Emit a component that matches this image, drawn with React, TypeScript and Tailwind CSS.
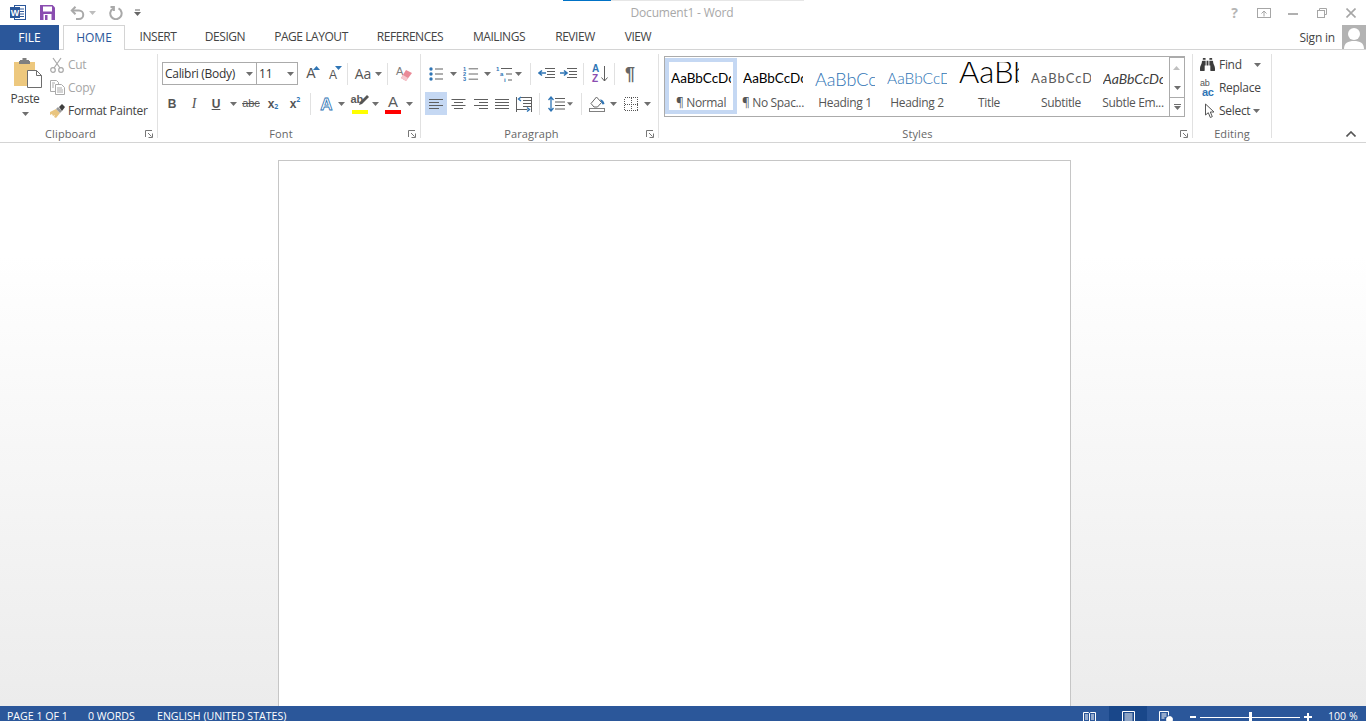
import type { ReactNode } from 'react'
import { FaBinoculars } from 'react-icons/fa'

const ui = 'font-["Open_Sans",sans-serif]'
const blue = '#2f75b5'

function Caret({ color = '#6f6f6f' }: { color?: string }) {
  return (
    <svg width="7" height="4" viewBox="0 0 7 4">
      <path d="M0 0h7L3.5 4z" fill={color} />
    </svg>
  )
}

function Launcher() {
  return (
    <svg width="8" height="8" viewBox="0 0 8 8" fill="none" stroke="#777">
      <path d="M.5 7V.5H7" />
      <path d="M3 3l3.5 3.5M3.5 7.5h4v-4" />
    </svg>
  )
}

function Sep() {
  return <div className="w-px h-[22px] bg-[#e1e1e1] shrink-0" />
}

function GroupLine() {
  return <div className="w-px h-[84px] mt-[4px] bg-[#e1e1e1] shrink-0" />
}

function Cell({ className = 'w-[22px]', children }: { className?: string; children: ReactNode }) {
  return <div className={`flex items-center justify-center h-full shrink-0 ${className}`}>{children}</div>
}

function GroupLabel({ label, launcher = true, pad = 'pr-[16px]' }: { label: string; launcher?: boolean; pad?: string }) {
  return (
    <div className={`relative mt-auto mb-[1px] h-[14px] text-center text-[11px] leading-[14px] tracking-[0.1px] text-[#666] ${pad}`}>
      {label}
      {launcher && (
        <span className="absolute right-[4px] top-[3px] flex">
          <Launcher />
        </span>
      )}
    </div>
  )
}

function Lines({ widths = [14, 14, 14, 14], align = 'left' }: { widths?: number[]; align?: 'left' | 'center' | 'right' }) {
  return (
    <svg width="15" height="12" viewBox="0 0 15 12" fill="none" stroke="#5f5f5f">
      {widths.map((w, i) => {
        const x = align === 'left' ? 0 : align === 'right' ? 15 - w : (15 - w) / 2
        return <path key={i} d={`M${x} ${1.5 + i * 3}h${w}`} />
      })}
    </svg>
  )
}

function WordLogo() {
  return (
    <svg width="16" height="15" viewBox="0 0 16 15">
      <rect x="4.5" y=".5" width="11" height="14" fill="#fff" stroke="#2b579a" />
      <path d="M10 4h4M10 6.5h4M10 9h4M10 11.5h4" stroke="#2b579a" />
      <rect x="0" y="2" width="10" height="11" fill="#2b579a" />
      <text x="5" y="11" fontSize="9" fontWeight="700" fill="#fff" textAnchor="middle" fontFamily="Liberation Sans">W</text>
    </svg>
  )
}

function SaveIcon() {
  return (
    <svg width="15" height="15" viewBox="0 0 15 15">
      <path d="M0 0h12.5L15 2.5V15H0z" fill="#8a4db0" />
      <rect x="3" y="1.5" width="9" height="5" fill="#fff" />
      <rect x="3.5" y="9" width="8" height="6" fill="#fff" />
      <rect x="5" y="10" width="2.5" height="5" fill="#8a4db0" />
    </svg>
  )
}

function UndoIcon() {
  return (
    <svg width="15" height="14" viewBox="0 0 15 14" fill="none" stroke="#a9a9a9" strokeWidth="2">
      <path d="M2 4.5h7a4.2 4.2 0 0 1 0 8.5H6" />
      <path d="M5.5 .8L1.8 4.5l3.7 3.7" />
    </svg>
  )
}

function RedoIcon() {
  return (
    <svg width="14" height="14" viewBox="0 0 14 14" fill="none" stroke="#a9a9a9" strokeWidth="2">
      <path d="M4 2.6A5.7 5.7 0 1 0 9.5 2.4" />
      <path d="M1.5 1h3.4v4" />
    </svg>
  )
}

function Customize() {
  return (
    <svg width="7" height="7" viewBox="0 0 7 7">
      <path d="M1 .5h5v1H1z" fill="#666" />
      <path d="M0 3h7L3.5 7z" fill="#666" />
    </svg>
  )
}

function PasteIcon() {
  return (
    <svg width="30" height="30" viewBox="0 0 30 30">
      <path d="M1 4h21v24H1z" fill="#edc87e" />
      <path d="M7 4h9v-2h-2.5V0h-4v2H7z" fill="#7f7f7f" />
      <rect x="6" y="3" width="11" height="3" fill="#7f7f7f" />
      <path d="M14.5 12.5h9l5 5v12h-14z" fill="#fff" stroke="#6d6d6d" />
      <path d="M23.5 12.5v5h5" fill="none" stroke="#6d6d6d" />
    </svg>
  )
}

function CutIcon() {
  return (
    <svg width="14" height="16" viewBox="0 0 14 16" fill="none" stroke="#a9a9a9" strokeWidth="1.2">
      <circle cx="3" cy="13" r="2.3" />
      <circle cx="11" cy="13" r="2.3" />
      <path d="M4 11L11 1M10 11L3 1" />
    </svg>
  )
}

function CopyIcon() {
  return (
    <svg width="15" height="15" viewBox="0 0 15 15" fill="#fff" stroke="#aaaaaa">
      <path d="M.5.5h6l2 2v9h-8z" />
      <path d="M5.5 4.5h6l3 3v7h-9z" />
      <path d="M7 8h5M7 10h6M7 12h6M2 3h3M2 5h2M2 7h2" />
    </svg>
  )
}

function PainterIcon() {
  return (
    <svg width="16" height="14" viewBox="0 0 16 14">
      <path d="M0 8l6-3 4 4-4 5-2-1 1-2-2 1-1-2-2 1z" fill="#e9c57f" />
      <path d="M6 5l4 4 2-2-4-4z" fill="#9a9a9a" />
      <path d="M9 3l3-3 3 3-3 4z" fill="#3f3f3f" />
    </svg>
  )
}

function BulletIcon() {
  return (
    <svg width="14" height="14" viewBox="0 0 14 14">
      <circle cx="2" cy="2" r="1.7" fill="#2f75b5" />
      <circle cx="2" cy="7" r="1.7" fill="#2f75b5" />
      <circle cx="2" cy="12" r="1.7" fill="#2f75b5" />
      <path d="M6 2h8M6 7h8M6 12h8" stroke="#5f5f5f" />
    </svg>
  )
}

function NumberIcon({ multi }: { multi?: boolean }) {
  return (
    <svg width="17" height="16" viewBox="0 0 17 16" fontFamily="Liberation Sans" fontSize="6" fontWeight="700" fill="#2f75b5">
      <text x="0" y="5">1</text>
      <text x={multi ? 4 : 0} y="10">{multi ? 'a' : '2'}</text>
      <text x={multi ? 8 : 0} y="15.5">{multi ? 'i' : '3'}</text>
      {multi ? (
        <path d="M5 2.5h11M10 8h6M12 14h4" stroke="#5f5f5f" />
      ) : (
        <path d="M6 2.5h10M6 8h10M6 13.5h10" stroke="#5f5f5f" />
      )}
    </svg>
  )
}

function IndentIcon({ increase }: { increase?: boolean }) {
  return (
    <svg width="17" height="11" viewBox="0 0 17 11" fill="none">
      <path d="M7 .5h10M9 3.5h8M9 6.5h8M7 9.5h10" stroke="#5f5f5f" />
      {increase ? (
        <path d="M0 5h6M4 2.5L7 5 4 7.5" stroke="#2f75b5" strokeWidth="1.6" />
      ) : (
        <path d="M8 5H1.5M4 2.5L1 5l3 2.5" stroke="#2f75b5" strokeWidth="1.6" />
      )}
    </svg>
  )
}

function SortIcon() {
  return (
    <div className="relative w-[16px] h-[20px] font-['Liberation_Sans',sans-serif] text-[10px] leading-[10px] font-bold">
      <span className="block text-[#2f75b5]">A</span>
      <span className="block text-[#8a4db0]">Z</span>
      <svg className="absolute right-0 top-[2px]" width="7" height="16" viewBox="0 0 7 16" fill="none" stroke="#5f5f5f">
        <path d="M3.5 0v15M.5 11.5l3 3.5 3-3.5" />
      </svg>
    </div>
  )
}

function JustifyDistIcon() {
  return (
    <svg width="16" height="16" viewBox="0 0 16 16" fill="none" stroke="#5f5f5f">
      <path d="M4 1.5h11.5M7 4.5h8.5M7 7.5h8.5M7 10.5h8.5M.5 13.5h11M.5 1v15M15.5 1v15" />
      <path d="M5 1L2.5 3 5 5" stroke="#2f75b5" strokeWidth="1.4" />
      <path d="M11 11.5l2.5 2-2.5 2" stroke="#2f75b5" strokeWidth="1.4" />
    </svg>
  )
}

function SpacingIcon() {
  return (
    <svg width="17" height="16" viewBox="0 0 17 16" fill="none">
      <path d="M7 2.5h10M7 6h10M7 9.5h10M7 13h10" stroke="#5f5f5f" />
      <path d="M3 1v14M.5 4L3 1l2.5 3M.5 12L3 15l2.5-3" stroke="#2f75b5" strokeWidth="1.3" />
    </svg>
  )
}

function ShadingIcon() {
  return (
    <svg width="17" height="16" viewBox="0 0 17 16" fill="none">
      <path d="M2 7.5L7.5 1l5 5.5-4 4.5H5z" fill="#fff" stroke="#666" />
      <path d="M11 3.5c2.5 0 4 2 4.5 4.5l-2 .5z" fill="#2f75b5" />
      <rect x=".5" y="12.5" width="15" height="3" stroke="#808080" />
    </svg>
  )
}

function BordersIcon() {
  return (
    <svg width="14" height="14" viewBox="0 0 14 14" fill="none" stroke="#555" strokeDasharray="1 1" shapeRendering="crispEdges">
      <rect x=".5" y=".5" width="13" height="13" />
      <path d="M7.5 .5v13M.5 7.5h13" />
    </svg>
  )
}

function EraserIcon() {
  return (
    <div className="relative w-[16px] h-[17px]">
      <span className="absolute left-0 -top-[2px] text-[#7d7d7d] text-[11px] font-['Liberation_Sans',sans-serif]">A</span>
      <svg className="absolute left-0 top-0" width="16" height="17" viewBox="0 0 16 17">
        <path d="M10 5l6 3-6 8-5-3z" fill="#ea8a97" />
        <path d="M5 13l2-3 5 3-2 3z" fill="#f6c9cf" />
      </svg>
    </div>
  )
}

function Highlighter() {
  return (
    <div className="relative w-[17px] h-[20px]">
      <span className="absolute -left-[1px] -top-[2px] text-[11px] leading-[14px] text-[#5a5a5a] font-bold font-['Liberation_Sans',sans-serif]">ab</span>
      <svg className="absolute left-0 top-0" width="17" height="14" viewBox="0 0 17 14">
        <path d="M7 11l1-3 7-7 2 2-7 7z" fill="#555" />
      </svg>
      <span className="absolute left-0 bottom-0 w-[16px] h-[4px] bg-[#ffff00]" />
    </div>
  )
}

function FontColor() {
  return (
    <div className="relative w-[17px] h-[20px] text-center">
      <span className="block text-[15px] leading-[16px] text-[#5a5a5a] font-['Liberation_Sans',sans-serif]">A</span>
      <span className="absolute left-0 bottom-0 w-[16px] h-[4px] bg-[#ff0000]" />
    </div>
  )
}

function SelectCursor() {
  return (
    <svg width="13" height="16" viewBox="0 0 13 16" fill="#fff" stroke="#555">
      <path d="M1.5 1v11l2.8-2.3 2 4.8 2-.9-2-4.6h3.7z" />
    </svg>
  )
}

function StyleItem({ preview, label, selected, previewClass }: { preview: string; label: string; selected?: boolean; previewClass: string }) {
  return (
    <div className={`w-[72px] h-[56px] mt-px shrink-0 ${selected ? 'border-4 border-[#c5d8f3]' : 'border-4 border-transparent'}`}>
      <div className="ml-[2px] w-[60px] h-[30px] overflow-hidden whitespace-nowrap">
        <div className={`font-["Lato",sans-serif] ${previewClass}`}>{preview}</div>
      </div>
      <div className="-mx-[4px] h-[16px] mt-[3px] text-center text-[12px] leading-[16px] tracking-[-0.35px] text-[#555] whitespace-nowrap">{label}</div>
    </div>
  )
}

function ClipboardGroup() {
  return (
    <div className="w-[157px] h-full flex flex-col shrink-0">
      <div className="flex">
        <div className="ml-[5px] w-[40px] pt-[8px] flex flex-col items-center">
          <div className="ml-[6px]">
            <PasteIcon />
          </div>
          <div className="mt-[3px] h-[16px] text-[12px] leading-[16px] tracking-[-0.3px] text-[#444]">Paste</div>
          <div className="mt-[5px] flex">
            <Caret />
          </div>
        </div>
        <div className="ml-[5px] pt-[3px] text-[12px] leading-[23px] tracking-[-0.3px]">
          <div className="flex items-center h-[23px] text-[#a6a6a6]">
            <span className="w-[18px] flex"><CutIcon /></span>Cut
          </div>
          <div className="flex items-center h-[23px] text-[#a6a6a6]">
            <span className="w-[18px] flex"><CopyIcon /></span>Copy
          </div>
          <div className="flex items-center h-[23px] text-[#444]">
            <span className="w-[18px] flex"><PainterIcon /></span>Format Painter
          </div>
        </div>
      </div>
      <GroupLabel label="Clipboard" />
    </div>
  )
}

function FontGroup() {
  return (
    <div className="w-[262px] h-full flex flex-col shrink-0">
      <div className="flex items-center h-[23px] mt-[12px] pl-[4px]">
        <div className="w-[95px] h-[23px] border border-[#ababab] flex items-center justify-between pl-[2px] pr-[3px] text-[12px] tracking-[-0.3px] text-[#333]">
          Calibri (Body)
          <Caret />
        </div>
        <div className="w-[42px] h-[23px] -ml-px border border-[#ababab] flex items-center justify-between pl-[2px] pr-[3px] text-[12px] text-[#333]">
          11
          <Caret />
        </div>
        <Cell className="w-[22px] ml-[2px] relative">
          <span className="text-[14px] text-[#555] font-['Liberation_Sans',sans-serif]">A</span>
          <span className="absolute right-[2px] top-[4px] rotate-180 flex"><Caret color={blue} /></span>
        </Cell>
        <Cell className="w-[22px] relative">
          <span className="text-[12px] text-[#555] mt-[2px] font-['Liberation_Sans',sans-serif]">A</span>
          <span className="absolute right-[2px] top-[4px] flex"><Caret color={blue} /></span>
        </Cell>
        <div className="ml-[3px]"><Sep /></div>
        <Cell className="w-[22px] ml-[4px]">
          <span className="text-[14px] text-[#555]">Aa</span>
        </Cell>
        <Cell className="w-[8px]"><Caret /></Cell>
        <div className="ml-[5px]"><Sep /></div>
        <Cell className="w-[22px] ml-[5px]"><EraserIcon /></Cell>
      </div>
      <div className="flex items-center h-[23px] mt-[7px] pl-[3px] text-[#555]">
        <Cell><span className="text-[12px] font-bold font-['Liberation_Sans',sans-serif]">B</span></Cell>
        <Cell><span className="text-[14px] italic font-['Liberation_Serif',serif]">I</span></Cell>
        <Cell><span className="text-[12px] font-bold underline font-['Liberation_Sans',sans-serif]">U</span></Cell>
        <Cell className="w-[12px]"><Caret /></Cell>
        <Cell className="w-[22px] ml-px"><span className="text-[11px] line-through font-['Liberation_Sans',sans-serif]">abc</span></Cell>
        <Cell>
          <span className="text-[12px] font-bold font-['Liberation_Sans',sans-serif]">x</span>
          <span className="text-[7px] mt-[7px] text-[#2f75b5] font-bold">2</span>
        </Cell>
        <Cell>
          <span className="text-[12px] font-bold font-['Liberation_Sans',sans-serif]">x</span>
          <span className="text-[7px] -mt-[6px] text-[#2f75b5] font-bold">2</span>
        </Cell>
        <div className="ml-[4px]"><Sep /></div>
        <Cell className="w-[22px] ml-[4px]">
          <svg width="17" height="16" viewBox="0 0 17 16">
            <text x="8.5" y="14" textAnchor="middle" fontSize="17" fontWeight="700" fill="#fff" stroke="#2f75b5" strokeWidth=".8" fontFamily="Liberation Sans">A</text>
          </svg>
        </Cell>
        <Cell className="w-[8px]"><Caret /></Cell>
        <Cell className="w-[22px] ml-[4px]"><Highlighter /></Cell>
        <Cell className="w-[8px]"><Caret /></Cell>
        <Cell className="w-[22px] ml-[3px]"><FontColor /></Cell>
        <Cell className="w-[10px]"><Caret /></Cell>
      </div>
      <GroupLabel label="Font" />
    </div>
  )
}

function ParagraphGroup() {
  return (
    <div className="w-[237px] h-full flex flex-col shrink-0">
      <div className="flex items-center h-[23px] mt-[12px] pl-[8px]">
        <Cell className="w-[14px]"><BulletIcon /></Cell>
        <Cell className="w-[20px]"><Caret /></Cell>
        <Cell className="w-[16px]"><NumberIcon /></Cell>
        <Cell className="w-[17px]"><Caret /></Cell>
        <Cell className="w-[17px]"><NumberIcon multi /></Cell>
        <Cell className="w-[11px]"><Caret /></Cell>
        <div className="ml-[6px]"><Sep /></div>
        <Cell className="w-[22px] ml-[4px]"><IndentIcon /></Cell>
        <Cell className="w-[22px]"><IndentIcon increase /></Cell>
        <div className="ml-[4px]"><Sep /></div>
        <Cell className="w-[22px] ml-[5px]"><SortIcon /></Cell>
        <div className="ml-[3px]"><Sep /></div>
        <Cell className="w-[22px] ml-[4px]">
          <span className="text-[18px] leading-[18px] font-bold text-[#666] font-['Liberation_Sans',sans-serif]">¶</span>
        </Cell>
      </div>
      <div className="flex items-center h-[23px] mt-[7px] pl-[4px]">
        <Cell className="w-[22px] bg-[#c5d8f3]"><Lines widths={[14, 10, 14, 10]} /></Cell>
        <Cell><Lines widths={[14, 9, 14, 9]} align="center" /></Cell>
        <Cell><Lines widths={[14, 9, 14, 9]} align="right" /></Cell>
        <Cell><Lines /></Cell>
        <Cell><JustifyDistIcon /></Cell>
        <div className="ml-[4px]"><Sep /></div>
        <Cell className="w-[22px] ml-[5px]"><SpacingIcon /></Cell>
        <Cell className="w-[6px]"><Caret /></Cell>
        <div className="ml-[8px]"><Sep /></div>
        <Cell className="w-[22px] ml-[4px]"><ShadingIcon /></Cell>
        <Cell className="w-[10px]"><Caret /></Cell>
        <Cell className="w-[22px] ml-[2px]"><BordersIcon /></Cell>
        <Cell className="w-[10px]"><Caret /></Cell>
      </div>
      <GroupLabel label="Paragraph" />
    </div>
  )
}

function StylesGroup() {
  return (
    <div className="w-[533px] h-full flex flex-col shrink-0">
      <div className="ml-[5px] mt-[6px] w-[521px] h-[61px] border border-[#ababab] flex">
        <StyleItem preview="AaBbCcDc" label="¶ Normal" selected previewClass="text-[13.5px] leading-[33px] text-black" />
        <StyleItem preview="AaBbCcDc" label="¶ No Spac..." previewClass="text-[13.5px] leading-[33px] text-black" />
        <StyleItem preview="AaBbCc" label="Heading 1" previewClass="text-[18px] leading-[34px] font-light text-[#2e74b5]" />
        <StyleItem preview="AaBbCcD" label="Heading 2" previewClass="text-[15.5px] leading-[32px] font-light text-[#2e74b5]" />
        <StyleItem preview="AaBbCc" label="Title" previewClass="text-[31px] leading-[19px] font-light text-black" />
        <StyleItem preview="AaBbCcD" label="Subtitle" previewClass="text-[13px] leading-[33px] tracking-[1px] text-[#5a5a5a]" />
        <StyleItem preview="AaBbCcDc" label="Subtle Em..." previewClass="text-[14px] leading-[33px] italic text-[#404040]" />
        <div className="ml-auto w-[15px] h-full flex flex-col border-l border-[#ababab]">
          <div className="h-[21px] flex items-center justify-center border-b border-[#ababab] rotate-180"><Caret color="#c0c0c0" /></div>
          <div className="h-[20px] flex items-center justify-center border-b border-[#ababab]"><Caret /></div>
          <div className="flex-1 flex flex-col items-center justify-center gap-[1px]">
            <span className="w-[7px] h-px bg-[#6f6f6f]" />
            <Caret />
          </div>
        </div>
      </div>
      <GroupLabel label="Styles" />
    </div>
  )
}

function EditingGroup() {
  return (
    <div className="w-[78px] h-full flex flex-col shrink-0">
      <div className="pl-[7px] pt-[3px] text-[12px] tracking-[-0.3px] text-[#444]">
        <div className="flex items-center h-[23px]">
          <span className="w-[19px] flex text-[#3c3c3c]"><FaBinoculars size={15} /></span>
          Find
          <span className="ml-[12px] flex"><Caret /></span>
        </div>
        <div className="flex items-center h-[23px]">
          <span className="w-[19px] relative h-[18px] font-['Liberation_Sans',sans-serif] leading-[9px] text-[9px]">
            <span className="block text-[#555]">ab</span>
            <span className="block pl-[2px] text-[11px] font-bold text-[#2f75b5]">ac</span>
          </span>
          Replace
        </div>
        <div className="flex items-center h-[23px]">
          <span className="w-[19px] pl-[4px] flex"><SelectCursor /></span>
          Select
          <span className="ml-[3px] flex"><Caret /></span>
        </div>
      </div>
      <GroupLabel label="Editing" launcher={false} pad="pr-0" />
    </div>
  )
}

const tabs = [
  { label: 'INSERT', w: 'w-[66px]' },
  { label: 'DESIGN', w: 'w-[68px]' },
  { label: 'PAGE LAYOUT', w: 'w-[104px]' },
  { label: 'REFERENCES', w: 'w-[94px]' },
  { label: 'MAILINGS', w: 'w-[84px]' },
  { label: 'REVIEW', w: 'w-[68px]' },
  { label: 'VIEW', w: 'w-[58px]' },
]

export default function App() {
  return (
    <div className={`${ui} relative w-full h-[721px] overflow-hidden bg-white text-[12px] text-[#444]`}>
      <div className="absolute left-[563px] top-0 flex h-px">
        <div className="w-[48px] bg-[#0072c6]" />
        <div className="w-[193px] bg-[#e6e6e6]" />
      </div>

      {/* title bar */}
      <div className="flex items-center h-[25px]">
        <div className="w-[150px] flex items-center pl-[10px] shrink-0">
          <WordLogo />
          <span className="ml-[14px] flex"><SaveIcon /></span>
          <span className="ml-[15px] flex"><UndoIcon /></span>
          <span className="ml-[4px] flex"><Caret color="#bdbdbd" /></span>
          <span className="ml-[13px] flex"><RedoIcon /></span>
          <span className="ml-[11px] flex"><Customize /></span>
        </div>
        <div className="w-[1064px] text-center text-[12px] tracking-[-0.2px] text-[#a8a8a8]">Document1 - Word</div>
        <div className="flex items-center h-full pl-[6px]">
          <Cell className="w-[29px]"><span className="text-[14px] font-bold text-[#b5b5b5]">?</span></Cell>
          <Cell className="w-[29px]">
            <svg width="14" height="10" viewBox="0 0 14 10" fill="none" stroke="#a6a6a6">
              <rect x=".5" y=".5" width="13" height="9" />
              <path d="M7 8.5V3.5M4.5 5.5L7 3l2.5 2.5" />
            </svg>
          </Cell>
          <Cell className="w-[29px]"><span className="w-[10px] h-[2px] bg-[#b0b0b0] mt-[3px]" /></Cell>
          <Cell className="w-[29px]">
            <svg width="10" height="10" viewBox="0 0 10 10" fill="none" stroke="#a6a6a6">
              <path d="M2.5 2.5V.5h7v6h-2" />
              <rect x=".5" y="2.5" width="7" height="7" />
            </svg>
          </Cell>
          <Cell className="w-[29px]">
            <svg width="10" height="10" viewBox="0 0 10 10" fill="none" stroke="#a6a6a6" strokeWidth="1.6">
              <path d="M.5.5l9 9M9.5.5l-9 9" />
            </svg>
          </Cell>
        </div>
      </div>

      {/* tabs */}
      <div className="flex h-[25px] border-b border-[#d4d4d4]">
        <div className="w-[59px] h-[25px] bg-[#2b579a] text-white flex items-center justify-center text-[12px]">FILE</div>
        <div className="ml-[4px] w-[62px] h-[25px] bg-white border-x border-t border-[#d4d4d4] text-[#2b579a] flex items-center justify-center text-[12px]">HOME</div>
        {tabs.map((t) => (
          <div key={t.label} className={`${t.w} flex items-center justify-center text-[12px] tracking-[-0.45px] text-[#444] shrink-0`}>
            {t.label}
          </div>
        ))}
        <div className="ml-auto flex items-start">
          <span className="mt-[4px] mr-[7px] text-[12px] tracking-[-0.2px] text-[#444]">Sign in</span>
          <div className="w-[24px] h-[24px] bg-[#b3b3b3] overflow-hidden">
            <svg width="24" height="24" viewBox="0 0 24 24" fill="#fff">
              <circle cx="12" cy="9" r="6" />
              <path d="M2 24c0-6 4-8 10-8s10 2 10 8z" />
            </svg>
          </div>
        </div>
      </div>

      {/* ribbon */}
      <div className="flex h-[93px] border-b border-[#d4d4d4]">
        <ClipboardGroup />
        <GroupLine />
        <FontGroup />
        <GroupLine />
        <ParagraphGroup />
        <GroupLine />
        <StylesGroup />
        <GroupLine />
        <EditingGroup />
        <GroupLine />
        <div className="flex-1 flex items-end justify-end pr-[10px] pb-[5px]">
          <svg width="10" height="6" viewBox="0 0 10 6" fill="none" stroke="#555" strokeWidth="1.6">
            <path d="M.5 5.5L5 1l4.5 4.5" />
          </svg>
        </div>
      </div>

      {/* document */}
      <div className="h-[563px] overflow-hidden bg-gradient-to-b from-white from-[20%] to-[#ececec] flex justify-center pr-[17px]">
        <div className="mt-[17px] w-[793px] h-[1122px] shrink-0 bg-white border border-[#c6c6c6]" />
      </div>

      {/* status bar */}
      <div className="flex items-center h-[22px] bg-[#2b579a] text-white text-[10.6px]">
        <span className="ml-[7px] w-[81px]">PAGE 1 OF 1</span>
        <span className="w-[69px]">0 WORDS</span>
        <span>ENGLISH (UNITED STATES)</span>
        <div className="ml-auto flex items-center h-full">
          <svg width="13" height="11" viewBox="0 0 13 11" fill="none" stroke="#fff">
            <path d="M.5.5h5l1 1 1-1h5v10h-5l-1-.5-1 .5h-5zM6.5 1.5v9M2 3h3M2 5h3M2 7h3M8 3h3M8 5h3M8 7h3" />
          </svg>
          <div className="ml-[13px] w-[38px] h-full bg-[#19478a] flex items-center justify-center">
            <svg width="13" height="12" viewBox="0 0 13 12" fill="none" stroke="#fff">
              <path d="M.5.5h12v11H.5zM2.5 3h8M2.5 5h8M2.5 7h8M2.5 9h8" />
            </svg>
          </div>
          <svg className="ml-[12px]" width="14" height="12" viewBox="0 0 14 12" fill="none" stroke="#fff">
            <path d="M8 10.5H.5V.5h9v4M2.5 3h5M2.5 5h5M2.5 7h3" />
            <circle cx="10.5" cy="8.5" r="3" fill="#fff" />
          </svg>
          <span className="ml-[17px] w-[6px] h-[2px] bg-white" />
          <div className="ml-[4px] relative w-[100px] h-px bg-white">
            <span className="absolute left-[49px] -top-[5px] w-[3px] h-[11px] bg-white" />
          </div>
          <span className="ml-[4px] relative w-[8px] h-[8px] flex items-center justify-center">
            <span className="absolute w-[8px] h-[2px] bg-white" />
            <span className="absolute w-[2px] h-[8px] bg-white" />
          </span>
          <span className="ml-[16px] w-[38px] text-[10.6px]">100 %</span>
        </div>
      </div>
    </div>
  )
}
